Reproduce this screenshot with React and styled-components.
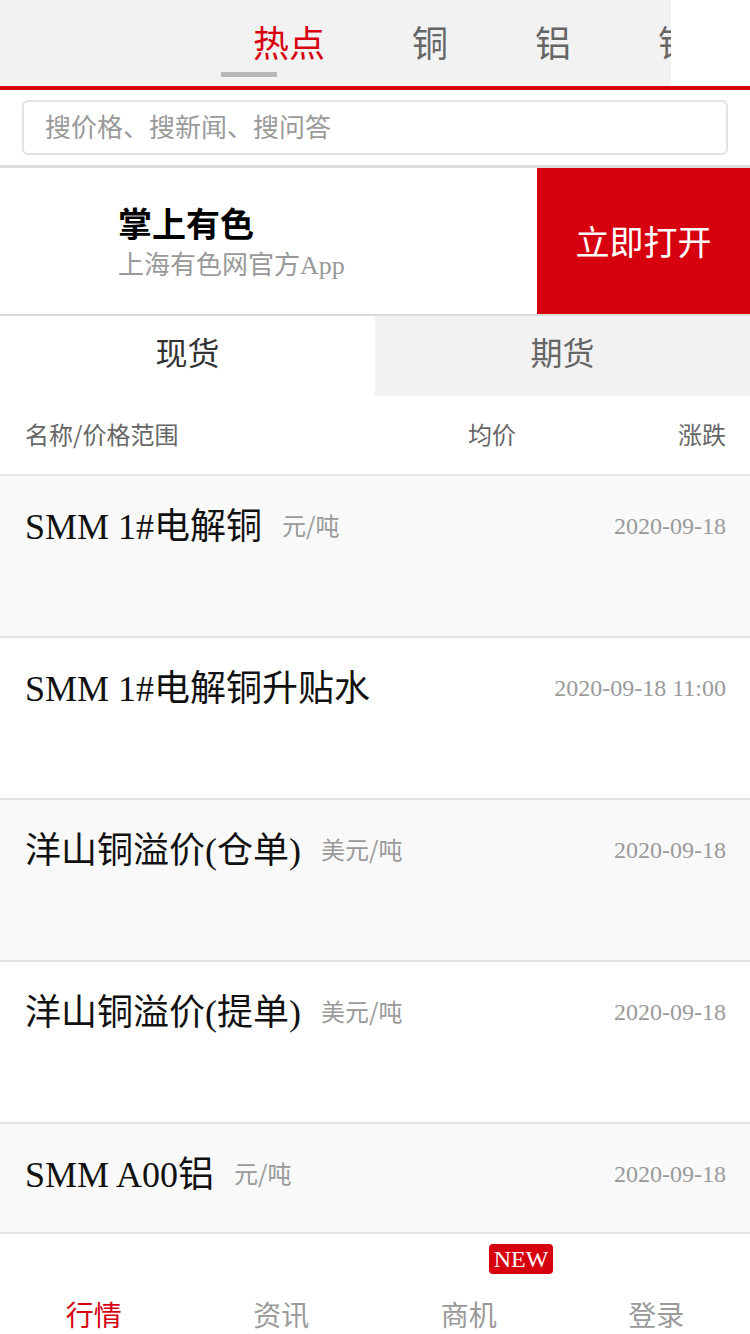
import styled, { createGlobalStyle } from 'styled-components';

const RED = '#d7000f';

const GlobalStyle = createGlobalStyle`
  html, body {
    margin: 0;
    padding: 0;
    background: #fff;
  }
  body {
    font-family: "Liberation Serif", "Noto Sans CJK SC", serif;
  }
  * {
    box-sizing: border-box;
  }
`;

const Page = styled.div`
  height: 100vh;
  display: flex;
  flex-direction: column;
  overflow: hidden;
`;

const Content = styled.div`
  flex: 1;
  overflow: hidden;
`;

const TopBar = styled.div`
  display: flex;
  height: 90px;
  border-bottom: 4px solid ${RED};
`;

const TabScroller = styled.div`
  position: relative;
  width: 671px;
  height: 86px;
  background: #f2f2f2;
  overflow: hidden;
  display: flex;
  align-items: center;
  gap: 87px;
  padding: 0 0 4px 253px;
  white-space: nowrap;
`;

const TopTab = styled.span`
  font-family: "Noto Sans CJK SC", sans-serif;
  font-size: 36px;
  line-height: 40px;
  color: ${(p) => (p.$active ? RED : '#666')};
  flex-shrink: 0;
`;

const Indicator = styled.span`
  position: absolute;
  left: 221px;
  top: 72px;
  width: 56px;
  height: 5px;
  background: #b8b8b8;
`;

const SearchWrap = styled.div`
  padding: 10px 22px;
  border-bottom: 3px solid #dedada;
`;

const SearchInput = styled.input`
  display: block;
  width: 100%;
  height: 55px;
  border: 2px solid #e2e2e2;
  border-radius: 6px;
  padding: 0 0 4px 21px;
  font-family: "Noto Sans CJK SC", sans-serif;
  font-size: 26px;
  color: #333;
  outline: none;
  &::placeholder {
    color: #9a9a9a;
  }
`;

const Banner = styled.div`
  display: flex;
  height: 148px;
  border-bottom: 2px solid #dedada;
`;

const BannerInfo = styled.div`
  flex: 1;
  display: flex;
  flex-direction: column;
  justify-content: center;
  padding: 6px 0 0 118px;
`;

const BannerTitle = styled.div`
  font-family: "Noto Sans CJK SC", sans-serif;
  font-weight: 700;
  font-size: 34px;
  line-height: 44px;
  color: #000;
`;

const BannerSub = styled.div`
  font-size: 26px;
  line-height: 42px;
  color: #999;
`;

const OpenButton = styled.div`
  width: 213px;
  background: ${RED};
  color: #fff;
  font-family: "Noto Sans CJK SC", sans-serif;
  font-size: 34px;
  display: flex;
  align-items: center;
  justify-content: center;
  padding-bottom: 2px;
`;

const MarketTabs = styled.div`
  display: grid;
  grid-template-columns: 1fr 1fr;
  height: 80px;
`;

const MarketTab = styled.div`
  display: flex;
  align-items: center;
  justify-content: center;
  font-family: "Noto Sans CJK SC", sans-serif;
  font-size: 32px;
  color: ${(p) => (p.$active ? '#333' : '#666')};
  background: ${(p) => (p.$active ? '#fff' : '#f2f2f2')};
  padding-bottom: 10px;
`;

const HeaderRow = styled.div`
  display: grid;
  grid-template-columns: 1fr 168px 90px;
  align-items: center;
  height: 80px;
  padding: 0 24px 4px 25px;
  border-bottom: 2px solid #e6e6e6;
  font-family: "Noto Sans CJK SC", sans-serif;
  font-size: 24px;
  color: #666;
`;

const HeaderCell = styled.span`
  text-align: ${(p) => p.$align || 'left'};
`;

const Row = styled.div`
  height: 162px;
  padding: 30px 24px 0 25px;
  background: ${(p) => (p.$alt ? '#f9f9f9' : '#fff')};
  border-bottom: 2px solid #e3e3e3;
`;

const TitleLine = styled.div`
  display: flex;
  align-items: center;
  height: 40px;
`;

const Name = styled.span`
  margin-top: -7px;
  font-size: 36px;
  color: #111;
  white-space: nowrap;
`;

const Unit = styled.span`
  margin: -4px 0 0 20px;
  font-family: "Noto Sans CJK SC", sans-serif;
  font-size: 24px;
  color: #9a9a9a;
`;

const DateText = styled.span`
  margin-left: auto;
  font-size: 24px;
  color: #9a9a9a;
  white-space: nowrap;
`;

const BottomNav = styled.nav`
  flex-shrink: 0;
  height: 102px;
  border-top: 2px solid #e6e6e6;
  display: grid;
  grid-template-columns: repeat(4, 1fr);
  background: #fff;
`;

const NavItem = styled.div`
  position: relative;
  display: flex;
  align-items: flex-end;
  justify-content: center;
  padding-bottom: 2px;
  font-family: "Noto Sans CJK SC", sans-serif;
  font-size: 28px;
  line-height: 36px;
  color: ${(p) => (p.$active ? RED : '#9a9a9a')};
`;

const NewBadge = styled.span`
  position: absolute;
  top: 10px;
  left: calc(50% + 20px);
  height: 30px;
  padding: 0 5px;
  border-radius: 4px;
  background: ${RED};
  color: #fff;
  font-family: "Liberation Serif", serif;
  font-size: 24px;
  line-height: 30px;
`;

const topTabs = ['热点', '铜', '铝', '锌'];

const rows = [
  { name: 'SMM 1#电解铜', unit: '元/吨', date: '2020-09-18' },
  { name: 'SMM 1#电解铜升贴水', unit: '', date: '2020-09-18 11:00' },
  { name: '洋山铜溢价(仓单)', unit: '美元/吨', date: '2020-09-18' },
  { name: '洋山铜溢价(提单)', unit: '美元/吨', date: '2020-09-18' },
  { name: 'SMM A00铝', unit: '元/吨', date: '2020-09-18' },
];

const navItems = ['行情', '资讯', '商机', '登录'];

export default function App() {
  return (
    <Page>
      <GlobalStyle />
      <Content>
        <TopBar>
          <TabScroller>
            {topTabs.map((t, i) => (
              <TopTab key={t} $active={i === 0}>{t}</TopTab>
            ))}
            <Indicator />
          </TabScroller>
        </TopBar>

        <SearchWrap>
          <SearchInput placeholder="搜价格、搜新闻、搜问答" />
        </SearchWrap>

        <Banner>
          <BannerInfo>
            <BannerTitle>掌上有色</BannerTitle>
            <BannerSub>上海有色网官方App</BannerSub>
          </BannerInfo>
          <OpenButton>立即打开</OpenButton>
        </Banner>

        <MarketTabs>
          <MarketTab $active>现货</MarketTab>
          <MarketTab>期货</MarketTab>
        </MarketTabs>

        <HeaderRow>
          <HeaderCell>名称/价格范围</HeaderCell>
          <HeaderCell>均价</HeaderCell>
          <HeaderCell $align="right">涨跌</HeaderCell>
        </HeaderRow>

        {rows.map((r, i) => (
          <Row key={r.name} $alt={i % 2 === 0}>
            <TitleLine>
              <Name>{r.name}</Name>
              {r.unit && <Unit>{r.unit}</Unit>}
              <DateText>{r.date}</DateText>
            </TitleLine>
          </Row>
        ))}
      </Content>

      <BottomNav>
        {navItems.map((n, i) => (
          <NavItem key={n} $active={i === 0}>
            {n}
            {n === '商机' && <NewBadge>NEW</NewBadge>}
          </NavItem>
        ))}
      </BottomNav>
    </Page>
  );
}
